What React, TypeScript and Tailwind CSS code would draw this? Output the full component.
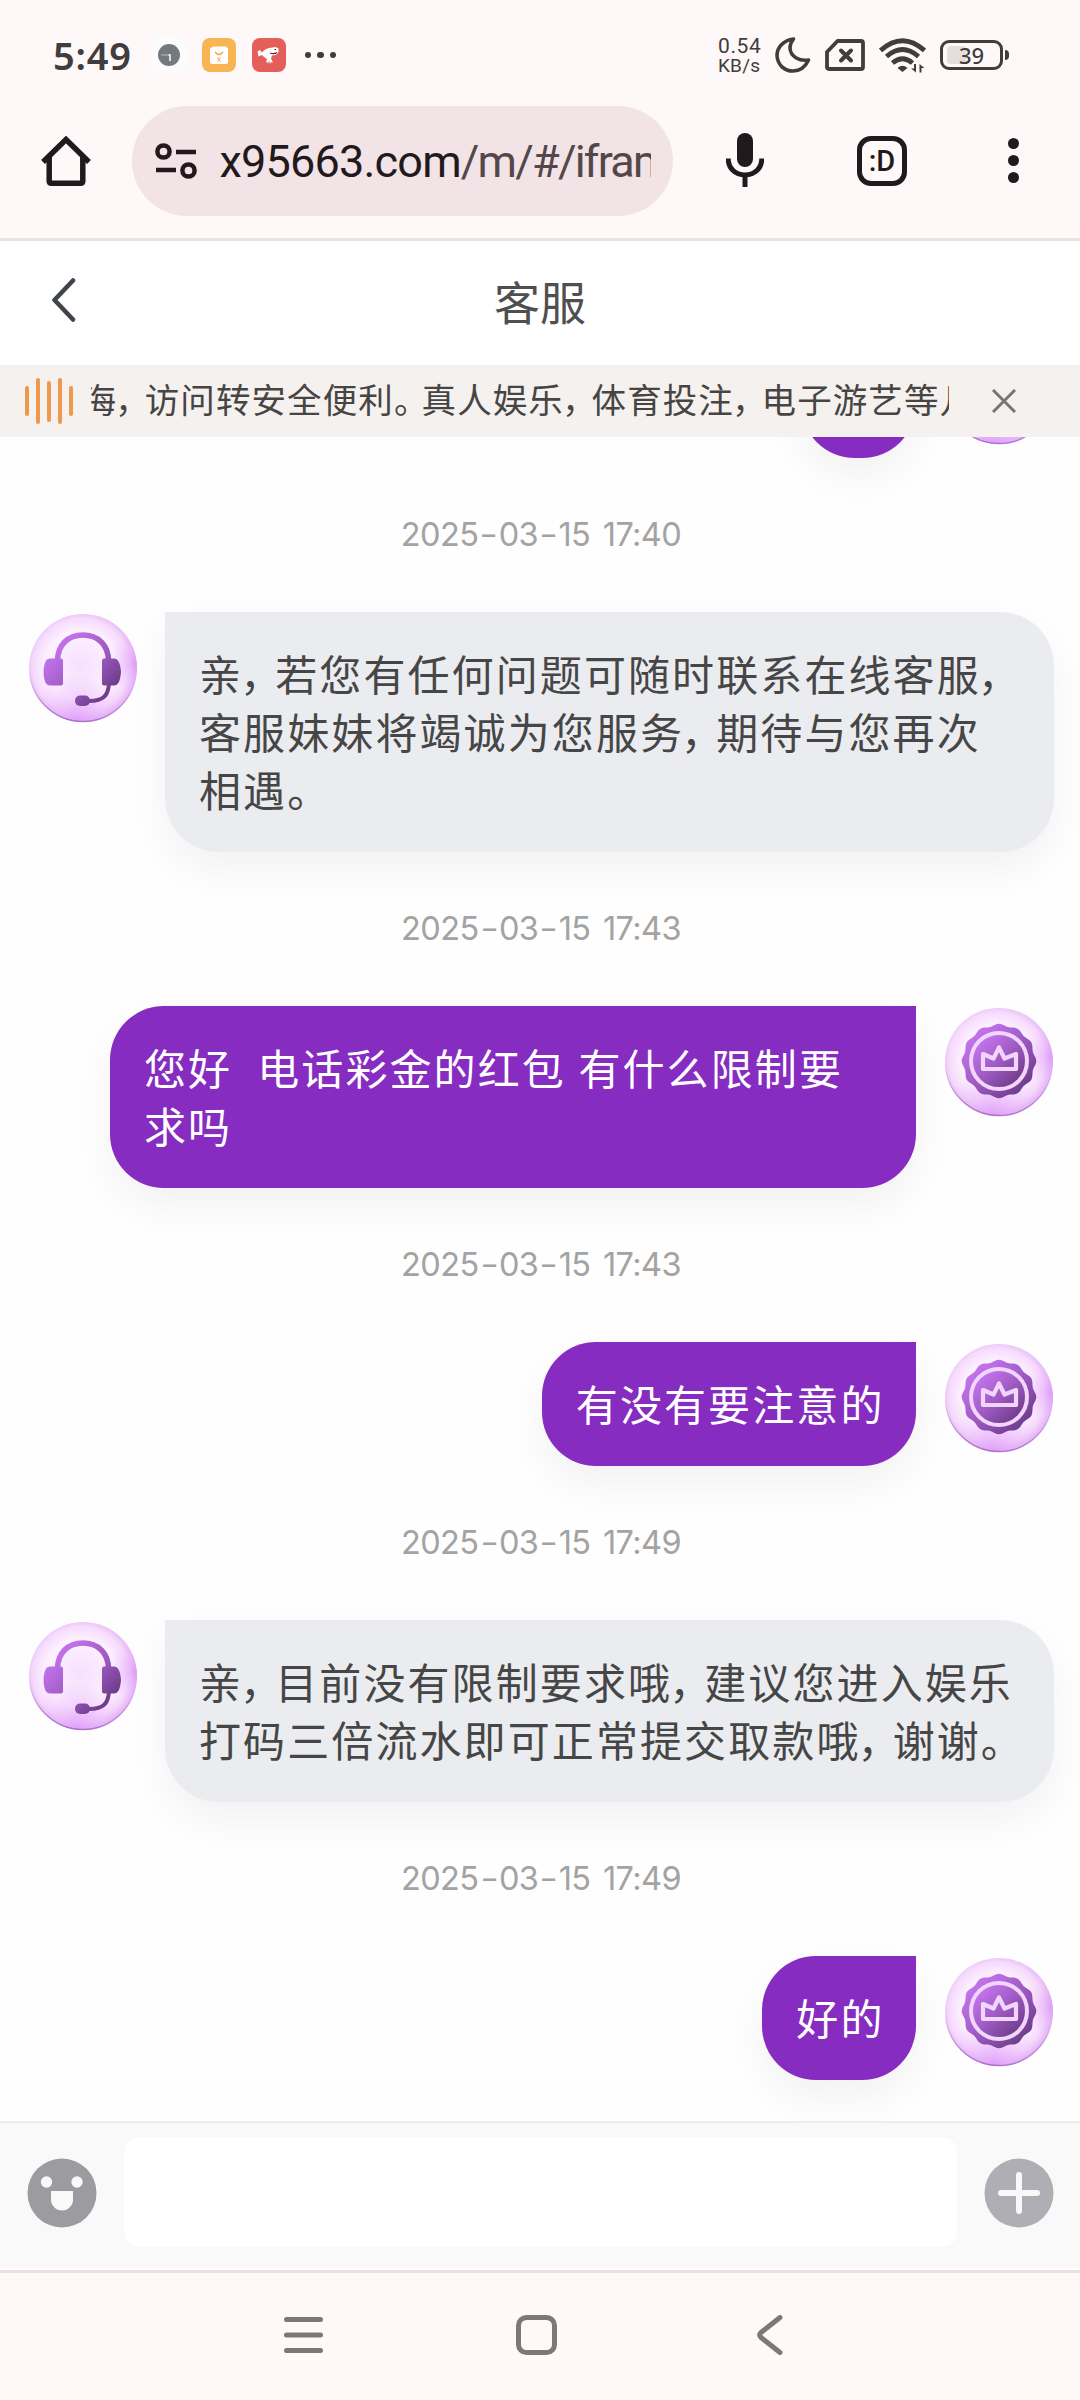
import React from 'react';

type Sender = 'agent' | 'user';

interface ChatMessage {
  id: number;
  sender: Sender;
  time?: string;
  lines: string[];
}

const messages: ChatMessage[] = [
  { id: 1, sender: 'user', lines: [] },
  {
    id: 2,
    sender: 'agent',
    time: '2025-03-15 17:40',
    lines: ['亲，若您有任何问题可随时联系在线客服，', '客服妹妹将竭诚为您服务，期待与您再次', '相遇。'],
  },
  { id: 3, sender: 'user', time: '2025-03-15 17:43', lines: ['您好  电话彩金的红包 有什么限制要', '求吗'] },
  { id: 4, sender: 'user', time: '2025-03-15 17:43', lines: ['有没有要注意的'] },
  {
    id: 5,
    sender: 'agent',
    time: '2025-03-15 17:49',
    lines: ['亲，目前没有限制要求哦，建议您进入娱乐', '打码三倍流水即可正常提交取款哦，谢谢。'],
  },
  { id: 6, sender: 'user', time: '2025-03-15 17:49', lines: ['好的'] },
];

// Full-width punctuation is set tighter than a whole em
const CjkText: React.FC<{ text: string; comma: string; stop: string }> = ({ text, comma, stop }) => (
  <>
    {text.split(/([，。])/).map((part, i) => {
      if (part === '，') return <span key={i} className={comma}>{part}</span>;
      if (part === '。') return <span key={i} className={stop}>{part}</span>;
      return part;
    })}
  </>
);

const AvatarBase: React.FC<{ id: string }> = ({ id }) => (
  <>
    <defs>
      <radialGradient id={`${id}-base`} cx="0.48" cy="0.48" r="0.54">
        <stop offset="0" stopColor="#f6e0fd" />
        <stop offset="0.6" stopColor="#fdf1ff" />
        <stop offset="0.82" stopColor="#f6dafd" />
        <stop offset="1" stopColor="#dfaaf3" />
      </radialGradient>
      <radialGradient id={`${id}-bottom`} cx="0.45" cy="1" r="0.45">
        <stop offset="0" stopColor="#dc98f8" stopOpacity="0.8" />
        <stop offset="1" stopColor="#e9b4fc" stopOpacity="0" />
      </radialGradient>
      <radialGradient id={`${id}-side`} cx="1" cy="0.45" r="0.28">
        <stop offset="0" stopColor="#d78af5" stopOpacity="0.6" />
        <stop offset="1" stopColor="#e9b4fc" stopOpacity="0" />
      </radialGradient>
      <linearGradient id={`${id}-rim`} x1="0.5" y1="0" x2="0.4" y2="1">
        <stop offset="0.55" stopColor="#a868c8" stopOpacity="0" />
        <stop offset="1" stopColor="#a868c8" stopOpacity="0.9" />
      </linearGradient>
      <linearGradient id={`${id}-ink`} x1="0.1" y1="0.1" x2="0.85" y2="0.9">
        <stop offset="0.1" stopColor="#c172ea" />
        <stop offset="0.5" stopColor="#a05cc6" />
        <stop offset="1" stopColor="#6c3b87" />
      </linearGradient>
    </defs>
    <circle cx="55" cy="55" r="54" fill={`url(#${id}-base)`} />
    <circle cx="55" cy="55" r="54" fill={`url(#${id}-bottom)`} />
    <circle cx="55" cy="55" r="54" fill={`url(#${id}-side)`} />
    <circle cx="55" cy="55" r="53.5" fill="none" stroke={`url(#${id}-rim)`} strokeWidth="1.4" />
  </>
);

const AgentAvatar: React.FC<{ id: string }> = ({ id }) => (
  <svg className="mt-px h-[110px] w-[110px] shrink-0" viewBox="0 0 110 110">
    <AvatarBase id={id} />
    <defs>
      <linearGradient id={`${id}-set`} gradientUnits="userSpaceOnUse" x1="20" y1="20" x2="90" y2="90">
        <stop offset="0.2" stopColor="#bf70e8" />
        <stop offset="0.6" stopColor="#9655b8" />
        <stop offset="0.85" stopColor="#6f3d8b" />
      </linearGradient>
    </defs>
    <path d="M29.500 48c0-16 10.500-26 25.500-26s25.500 10 25.500 26" fill="none" stroke={`url(#${id}-set)`} strokeWidth="5.500" />
    <path d="M22 45.500h11q2 0 2 2v23q0 2-2 2H22q-6 0-6.500-13.500Q16 45.500 22 45.500z" fill={`url(#${id}-set)`} />
    <path d="M76 45.500h10q6 0 7 13.500-1 13.500-7 13.500H76q-2 0-2-2v-23q0-2 2-2z" fill={`url(#${id}-set)`} />
    <path d="M81 71c-1 11-5 17-20 17" fill="none" stroke={`url(#${id}-set)`} strokeWidth="4" />
    <rect x="47" y="82.500" width="15" height="10.500" rx="5" fill={`url(#${id}-set)`} />
  </svg>
);

const SCALLOPS = 12;

const scallopPath = () => {
  const points: string[] = [];
  for (let i = 0; i < 120; i++) {
    const angle = (i / 120) * Math.PI * 2;
    const r = 36.2 + 1.1 * Math.cos((angle + Math.PI / 2) * SCALLOPS);
    points.push(`${(55 + r * Math.cos(angle)).toFixed(2)} ${(54 + r * Math.sin(angle)).toFixed(2)}`);
  }
  return `M${points.join('L')}Z`;
};

const UserAvatar: React.FC<{ id: string }> = ({ id }) => (
  <svg className="mt-px h-[110px] w-[110px] shrink-0" viewBox="0 0 110 110">
    <AvatarBase id={id} />
    <path d={scallopPath()} fill={`url(#${id}-ink)`} />
    <circle cx="55" cy="54" r="28" fill={`url(#${id}-ink)`} stroke="#f2d5fc" strokeWidth="4" />
    <path d="M39 62V47l10.500 4.500L55 40.500l5.500 11L72 47v15z" fill="none" stroke="#f2d5fc" strokeWidth="4.200" strokeLinejoin="round" />
  </svg>
);

const Timestamp: React.FC<{ value: string }> = ({ value }) => (
  <div className="flex h-[154px] shrink-0 items-center justify-center">
    <span className="font-['Inter'] text-[32.5px] tracking-[-0.6px] text-[#a3a3a3] [word-spacing:4px]">
      {value.split('-').map((part, i) => (
        <React.Fragment key={i}>
          {i > 0 && <span className="mx-[3px] inline-block scale-x-125">-</span>}
          {part}
        </React.Fragment>
      ))}
    </span>
  </div>
);

const Message: React.FC<{ message: ChatMessage }> = ({ message }) => {
  const isUser = message.sender === 'user';
  const id = `avatar-${message.id}`;
  return (
    <>
      {message.time && <Timestamp value={message.time} />}
      <div className={`flex shrink-0 items-start ${isUser ? 'justify-end gap-7' : 'gap-[27px]'}`}>
        {!isUser && <AgentAvatar id={id} />}
        <div
          className={`min-h-[124px] min-w-[115px] whitespace-pre rounded-[54px] pb-[34px] pl-[34px] pt-8 text-[42px] leading-[58px] tracking-[2.1px] shadow-[0_18px_40px_rgba(0,0,0,0.05)] ${
            isUser ? 'rounded-tr-none bg-[#862cc1] pr-[31.5px] text-white' : 'flex-1 rounded-tl-none bg-[#ebecf0] text-[#464646]'
          } ${isUser && message.lines.length > 1 ? 'w-[806px] [word-spacing:1px]' : ''}`}
        >
          {message.lines.map((line) => (
            <div key={line}>
              <CjkText text={line} comma="-ml-[3px] -mr-[9px]" stop="-mr-2" />
            </div>
          ))}
        </div>
        {isUser && <UserAvatar id={id} />}
      </div>
    </>
  );
};

const StatusBar = () => (
  <div className="flex h-[106px] shrink-0 items-center pl-[53px] pr-[71px] pt-1 text-[#403d3d]">
    <span className="w-[99px] font-['Noto_Sans'] text-[38px] font-semibold leading-none tracking-[0.8px]">5:49</span>
    <svg className="h-[34px] w-[34px]" viewBox="0 0 34 34">
      <rect width="34" height="34" rx="8" fill="#fbfcfd" />
      <circle cx="17" cy="17" r="11" fill="#737a7e" />
      <path d="M9 17h8" stroke="#a2a7a9" strokeWidth="1.500" />
      <path d="M16.500 17h1.500v6" stroke="#fff" strokeWidth="1.500" fill="none" />
    </svg>
    <svg className="ml-4 h-[34px] w-[34px]" viewBox="0 0 34 34">
      <rect width="34" height="34" rx="8" fill="#f8b554" />
      <path d="M11 8.500h13l2 2V24q0 2-2 2H10q-2 0-2-2V10.500z" fill="#fff" />
      <path d="M13 14q4 5 8 0" fill="none" stroke="#f0a848" strokeWidth="1.500" />
      <path d="M15 20.500l4 3.500M18.500 20.500l-3.500 3.500M15.500 20h3" stroke="#f0b066" strokeWidth="1" />
    </svg>
    <svg className="ml-4 h-[34px] w-[34px]" viewBox="0 0 34 34">
      <rect width="34" height="34" rx="8" fill="#e55f5a" />
      <path d="M5.500 13.500l2.500-1.500 2 2.500q3-4 7.500-4.500l6-1 3 1.500v3.500l-2.500 3-4 .5-1 3 2 4-2-.500-.500 2-1.500-3-1 3-.500-2-1.500.500 1-3.500-3-2-2-2-3.500 1.500z" fill="#fff" />
      <path d="M18 15q4 1.500 7-.500M22.500 11.500h1.500" stroke="#4d2a2a" strokeWidth="1.200" fill="none" />
    </svg>
    <div className="ml-[18.5px] flex gap-[6px]">
      <i className="h-[6.5px] w-[6.5px] rounded-full bg-current" />
      <i className="h-[6.5px] w-[6.5px] rounded-full bg-current" />
      <i className="h-[6.5px] w-[6.5px] rounded-full bg-current" />
    </div>

    <div className="ml-auto flex items-center">
      <div className="flex w-[57px] flex-col pt-0.5 font-['Roboto']">
        <span className="text-[21px] leading-[19px] tracking-[0.6px]">0.54</span>
        <span className="text-[19px] leading-[19px] tracking-[0.2px]">KB/s</span>
      </div>
      <svg className="h-9 w-9" viewBox="0 0 36 36" fill="none" stroke="currentColor" strokeWidth="3.600" strokeLinejoin="round">
        <path d="M18.500 2C7.500 3.500 2 11 2 18.500 2.500 28 9.500 34 18 34c7 0 12-3.500 15.500-11-8.500 1.500-18-3-18.500-12 0-4 1.500-6.500 3.500-9z" />
      </svg>
      <svg className="ml-[14px] h-8 w-[40px]" viewBox="0 0 40 32" fill="none" stroke="currentColor" strokeWidth="3.800" strokeLinejoin="round">
        <path d="M12.500 2H36q2 0 2 2v24q0 2-2 2H4q-2 0-2-2V13z" />
        <path d="M16 11.500l10 10M26 11.500l-10 10" strokeWidth="4" strokeLinecap="round" />
      </svg>
      <svg className="ml-[14px] h-[35px] w-[47px]" viewBox="0 0 47 35" fill="none" stroke="currentColor" strokeWidth="4.800">
        <path d="M1.500 12.500Q23.500-7 45.500 12.500M7.500 18.500Q23.500 4.500 39.500 18.500M13.500 25q10-8.500 20 0" />
        <path d="M23.500 34l-5-4q5-4.500 10 0z" fill="currentColor" stroke="none" />
        <path d="M37 26v8.500l-5-4h3V26zM40.500 34.500V26l5 4h-3v4.500z" fill="currentColor" stroke="none" />
      </svg>
      <div className="ml-[14px] flex items-center gap-0.5">
        <div className="relative flex h-[30px] w-[63px] items-center justify-center rounded-[9px] border-[3px] border-current">
          <div className="absolute left-1 top-[3px] h-[18px] w-[19px] rounded-[4px] bg-[#e4dedf]" />
          <span className="relative font-['Noto_Sans'] text-[22px] font-medium leading-none">39</span>
        </div>
        <i className="h-[10px] w-1 rounded-r-sm bg-current" />
      </div>
    </div>
  </div>
);

const BrowserBar = () => (
  <div className="flex h-[135px] shrink-0 items-start border-b-[3px] border-[#eedfe2] text-[#22191c]">
    <svg className="ml-[41px] mt-[30px] h-[50px] w-[50px]" viewBox="0 0 50 50" fill="none" stroke="currentColor" strokeWidth="5.500">
      <path d="M2 26L25 3.500 48 26" />
      <path d="M8.200 20v25q0 2.200 2.200 2.200h29.200q2.200 0 2.200-2.200V20" />
    </svg>
    <div className="ml-[41px] flex h-[110px] w-[541px] items-center rounded-full bg-[#f2e3e6] pl-[23px]">
      <svg className="h-9 w-[42px]" viewBox="0 0 42 36" fill="none" stroke="currentColor" strokeWidth="4.500">
        <circle cx="8.500" cy="8.500" r="6.100" />
        <path d="M21 9h20M1 27h20" />
        <circle cx="33.500" cy="27.500" r="6.100" />
      </svg>
      <div className="ml-[22.5px] mt-0.5 w-[431px] overflow-hidden whitespace-nowrap font-['Roboto'] text-[45px] leading-[60px] tracking-[-0.8px]">
        x95663.com<span className="tracking-[-1.8px] text-[#54474a]">/m/#/iframe</span>
      </div>
    </div>
    <svg className="ml-[53px] mt-[27px] h-[54px] w-[38px]" viewBox="0 0 38 54">
      <rect x="11" y="0" width="16" height="34" rx="8" fill="currentColor" />
      <path d="M2.200 25.500C2.200 35 9 42 19 42s16.800-7 16.800-16.500M19 42v12" fill="none" stroke="currentColor" strokeWidth="5" />
    </svg>
    <div className="ml-[93px] mt-[30px] flex h-[50px] w-[50px] items-center justify-center rounded-[14px] border-[5.5px] border-current font-['Roboto'] text-[29px] font-medium leading-none">
      :D
    </div>
    <div className="ml-[101px] mt-[32px] flex flex-col gap-[6px]">
      <i className="h-[11px] w-[11px] rounded-full bg-current" />
      <i className="h-[11px] w-[11px] rounded-full bg-current" />
      <i className="h-[11px] w-[11px] rounded-full bg-current" />
    </div>
  </div>
);

const waveBars = ['h-[30px]', 'h-[46px]', 'h-[41px]', 'h-[46px]', 'h-[30px]'];

const NoticeBar = () => (
  <div className="flex h-[72px] shrink-0 items-center bg-[#f5f1ee] pl-[24.5px]">
    <div className="flex items-center gap-[7px]">
      {waveBars.map((height, i) => (
        <i key={i} className={`w-[4px] rounded-full bg-[#ee9850] ${height}`} />
      ))}
    </div>
    <div className="mb-[6px] ml-[18px] w-[858px] overflow-hidden whitespace-nowrap text-[34.5px] leading-[60px] tracking-[1.1px] text-[#464544]">
      <span className="-ml-[9px]">
        <CjkText text="海，访问转安全便利。真人娱乐，体育投注，电子游艺等几" comma="-ml-0.5 -mr-1.5" stop="-mr-2" />
      </span>
    </div>
    <svg className="ml-[43px] h-6 w-6" viewBox="0 0 24 24" stroke="#787573" strokeWidth="3">
      <path d="M1 1l22 22M23 1L1 23" />
    </svg>
  </div>
);

const App: React.FC = () => {
  return (
    <div className="flex h-[2400px] w-[1080px] flex-col overflow-hidden bg-[#fef8f8] font-['Noto_Sans_CJK_SC',sans-serif]">
      <StatusBar />
      <BrowserBar />

      {/* Page header */}
      <header className="grid h-[124px] shrink-0 grid-cols-3 items-center bg-white">
        <svg className="mb-[7px] ml-[52px] h-11 w-6" viewBox="0 0 24 44" fill="none" stroke="#3f444a" strokeWidth="4.500" strokeLinecap="round" strokeLinejoin="round">
          <path d="M21 2.500L2.500 22 21 41.500" />
        </svg>
        <h1 className="mb-[7px] text-center text-[46px] leading-none text-[#4f4f4f]">客服</h1>
      </header>
      <NoticeBar />

      {/* Conversation */}
      <main className="flex min-h-0 flex-1 flex-col justify-end overflow-hidden bg-[#fefefe] pb-[41px] pl-[28px] pr-[26px]">
        {messages.map((message) => (
          <Message key={message.id} message={message} />
        ))}
      </main>

      {/* Composer */}
      <div className="flex h-[149px] shrink-0 items-center border-b-2 border-t-2 border-b-white border-t-[#ececec] bg-[#f9f9f9] pb-[7px] pl-[27px] pr-[26px]">
        <svg className="mt-0.5 h-[70px] w-[70px]" viewBox="0 0 70 70">
          <circle cx="35" cy="35" r="34.500" fill="#9c9ba0" />
          <circle cx="19.500" cy="24" r="5.700" fill="#f9f9f9" />
          <circle cx="50" cy="24" r="5.700" fill="#f9f9f9" />
          <path d="M24 33h22v8.500a11 11 0 0 1-22 0z" fill="#f9f9f9" />
        </svg>
        <div className="ml-[27px] h-[110px] flex-1 rounded-[15px] bg-white" />
        <svg className="ml-[27px] mt-0.5 h-[70px] w-[70px]" viewBox="0 0 70 70">
          <circle cx="35" cy="35" r="34.500" fill="#afaeb4" />
          <path d="M35 17v36M17 35h36" stroke="#f9f9f9" strokeWidth="6" strokeLinecap="round" />
        </svg>
      </div>

      {/* System navigation */}
      <nav className="flex h-[130px] shrink-0 items-start border-t-[3px] border-[#eedfe2] pl-[284px] pt-[42px]">
        <svg className="h-10 w-[39px]" viewBox="0 0 39 40" stroke="#7c7878" strokeWidth="5" strokeLinecap="round">
          <path d="M2.500 4.500h34M2.500 20h34M2.500 35.500h34" />
        </svg>
        <svg className="ml-[193px] h-10 w-[41px]" viewBox="0 0 41 40">
          <rect x="2.500" y="2.500" width="36" height="35" rx="8" fill="none" stroke="#7c7878" strokeWidth="5" />
        </svg>
        <svg className="ml-[200px] h-10 w-[26px]" viewBox="0 0 26 40" fill="none" stroke="#7c7878" strokeWidth="5" strokeLinecap="round" strokeLinejoin="round">
          <path d="M23 2.500L4 17.500q-2.500 2.500 0 5l19 15" />
        </svg>
      </nav>
    </div>
  );
};

export default App;
